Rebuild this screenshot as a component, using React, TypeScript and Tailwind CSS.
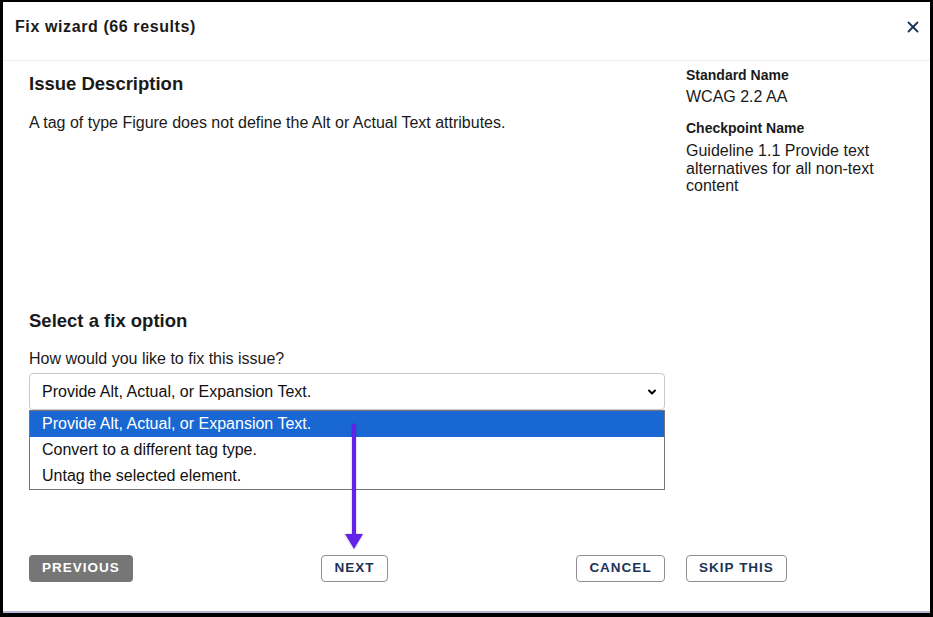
import { ChevronDown, X } from "lucide-react";

const options = [
  "Provide Alt, Actual, or Expansion Text.",
  "Convert to a different tag type.",
  "Untag the selected element.",
];

function OutlineButton({ label, width }: { label: string; width: string }) {
  return (
    <button
      className={`h-[27px] ${width} rounded-[4px] border border-[#8f8f8f] bg-white text-[13.5px] font-bold tracking-[1px] text-[#1b3456]`}
    >
      {label}
    </button>
  );
}

function DownArrow() {
  return (
    <svg
      className="pointer-events-none absolute left-[339px] top-[361px]"
      width="24"
      height="130"
      viewBox="0 0 24 130"
    >
      <defs>
        <filter id="soft" x="-50%" y="-10%" width="200%" height="120%">
          <feDropShadow dx="0" dy="0" stdDeviation="1" floodColor="#000" floodOpacity="0.25" />
        </filter>
      </defs>
      <g filter="url(#soft)" fill="#6222e8">
        <rect x="10" y="2" width="4" height="112" />
        <path d="M3 112 L21 112 L12 127 Z" />
      </g>
    </svg>
  );
}

export default function App() {
  return (
    <div
      className="flex h-[617px] w-[933px] flex-col bg-black px-[3px] pt-[2px] pb-[4px]"
      style={{ fontFamily: '"Liberation Sans", Arial, sans-serif' }}
    >
      <div className="flex flex-1 flex-col border-b-2 border-[#bcb4d6] bg-white text-[#1a1a1a]">
        <header className="flex h-[59px] shrink-0 items-start justify-between border-b border-[#ececec] pl-[12px] pr-[8px] pt-[13px]">
          <h1 className="text-[16px] font-bold leading-[24px] tracking-[0.6px] text-[#1a1a1a]">
            Fix wizard (66 results)
          </h1>
          <X size={18} strokeWidth={2.4} className="mt-[3px] text-[#1b3456]" />
        </header>

        <div className="relative flex gap-[21px] pl-[26px]">
          <div className="flex w-[636px] flex-col">
            <h2 className="mt-[11px] text-[18.5px] font-bold leading-[24px]">Issue Description</h2>
            <p className="mt-[16px] text-[16px] leading-[22px]">
              A tag of type Figure does not define the Alt or Actual Text attributes.
            </p>

            <h2 className="mt-[175px] text-[18.5px] font-bold leading-[24px]">Select a fix option</h2>
            <label className="mt-[15px] text-[16px] leading-[22px]">How would you like to fix this issue?</label>

            <div className="mt-[3px] flex h-[37px] items-center justify-between rounded-[4px] border border-[#c9c9c9] pl-[12px] pr-[6px] text-[16px] text-[#111]">
              <span>{options[0]}</span>
              <ChevronDown size={12} strokeWidth={4} className="text-black" />
            </div>

            <ul className="border border-[#767676] text-[16px] text-[#111]">
              {options.map((opt, i) => (
                <li
                  key={opt}
                  className={`flex h-[26px] items-center pl-[12px] ${i === 0 ? "bg-[#1967d2] text-white" : ""}`}
                >
                  {opt}
                </li>
              ))}
            </ul>

            <div className="mt-[65px] flex items-center justify-between">
              <button className="h-[27px] w-[104px] rounded-[4px] bg-[#767676] text-[13.5px] font-bold tracking-[1px] text-white">
                PREVIOUS
              </button>
              <OutlineButton label="NEXT" width="w-[67px]" />
              <OutlineButton label="CANCEL" width="w-[89px]" />
            </div>
          </div>

          <div className="flex w-[210px] flex-col">
            <h3 className="mt-[5px] text-[14px] font-bold leading-[18px]">Standard Name</h3>
            <p className="mt-[3px] text-[16px] leading-[20px]">WCAG 2.2 AA</p>
            <h3 className="mt-[12px] text-[14px] font-bold leading-[18px]">Checkpoint Name</h3>
            <p className="mt-[5px] text-[16px] leading-[17.5px]">
              Guideline 1.1 Provide text alternatives for all non-text content
            </p>
            <div className="mt-auto">
              <OutlineButton label="SKIP THIS" width="w-[101px]" />
            </div>
          </div>

          <DownArrow />
        </div>
      </div>
    </div>
  );
}
